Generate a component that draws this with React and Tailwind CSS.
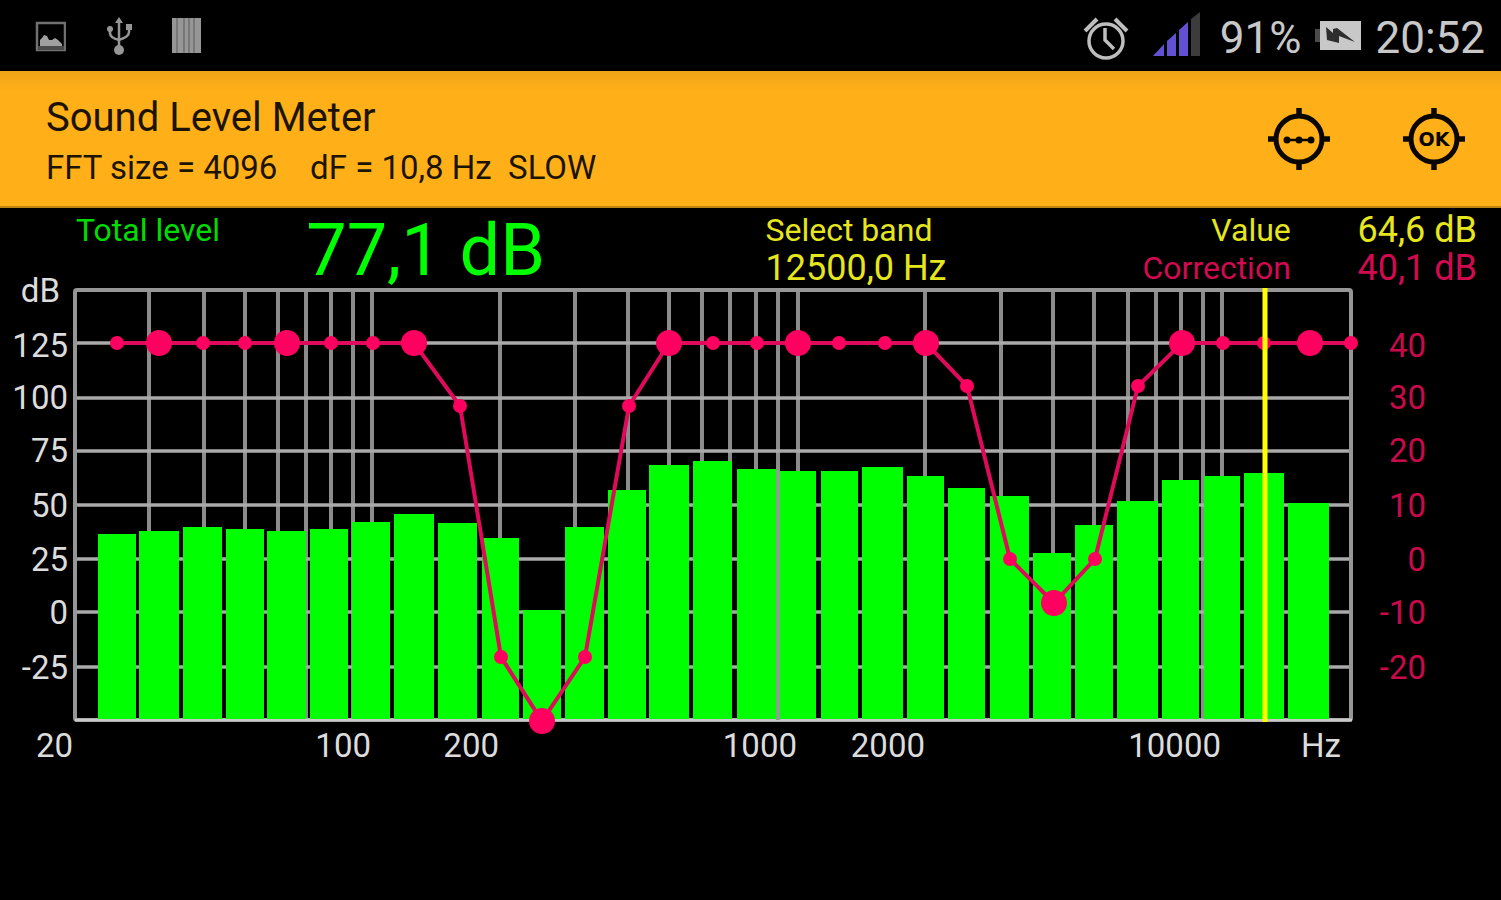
import { useState } from "react"

const verticals = [
  149, 204, 245, 278, 306, 331, 353, 372, 500, 575, 628, 669, 702, 730, 756, 778, 798,
  925, 1001, 1053, 1094, 1128, 1156, 1181, 1203, 1222,
]
const horizontals = [343, 398, 451, 505, 559, 612, 667]

// x, width, top of each third-octave bar
const bars = [
  [98, 38, 534], [139, 40, 531], [183, 39, 527], [226, 38, 529], [267, 39, 531],
  [310, 38, 529], [352, 38, 522], [394, 40, 514], [438, 39, 523], [482, 37, 538],
  [523, 38, 610], [565, 39, 527], [608, 38, 490], [649, 40, 465], [693, 39, 461],
  [737, 39, 469], [780, 36, 471], [821, 37, 471], [862, 41, 467], [907, 37, 476],
  [948, 37, 488], [990, 39, 496], [1033, 38, 553], [1075, 38, 525], [1117, 41, 501],
  [1162, 37, 480], [1204, 36, 476], [1244, 40, 473], [1288, 41, 503],
]

// x, y, octave point or not
const correction = [
  [117, 343, false], [159, 343, true], [203, 343, false], [245, 343, false],
  [287, 343, true], [331, 343, false], [373, 343, false], [414, 343, true],
  [460, 406, false], [501, 657, false], [542, 721, true], [585, 657, false],
  [629, 406, false], [669, 343, true], [713, 343, false], [757, 343, false],
  [798, 343, true], [839, 343, false], [885, 343, false], [926, 343, true],
  [967, 386, false], [1010, 559, false], [1054, 603, true], [1095, 559, false],
  [1138, 386, false], [1182, 343, true], [1223, 343, false], [1264, 343, false],
  [1310, 343, true], [1351, 343, false],
]

const leftLabels = [["dB", 60, 302], ["125", 68, 357], ["100", 68, 409], ["75", 68, 462],
  ["50", 68, 517], ["25", 68, 571], ["0", 68, 624], ["-25", 68, 679]]
const rightLabels = [["40", 357], ["30", 409], ["20", 462], ["10", 517],
  ["0", 571], ["-10", 624], ["-20", 679]]
const bottomLabels = [["20", 73], ["100", 371], ["200", 499], ["1000", 797],
  ["2000", 925], ["10000", 1221], ["Hz", 1341]]

const StatusBar = () => {
  return (
    <div className="flex h-[71px] items-center justify-between pr-4 pl-[34px] pt-1 text-[#c8c8c8]">
      <div className="mb-1 flex items-center gap-[39px]">
        {/* Picture */}
        <svg className="h-8 w-8" viewBox="0 0 32 32">
          <path d="M3 3H31V30H3Z" fill="none" stroke="#707070" strokeWidth="2.5" />
          <path d="M6 26V20L8 18L10 15L13 16L15 20L18 20L21 18L24 20L28 24V26Z" fill="#a0a0a0" />
          <path d="M4 26H30V30H4Z" fill="#4a4a4a" />
        </svg>
        {/* USB */}
        <svg className="h-10 w-7" viewBox="0 0 28 40" fill="none" stroke="#969696" strokeWidth="2.5">
          <path d="M14 5V34M14 24Q5 22 5 17V13M14 24Q24 21 24 16V11" />
          <path d="M14 1L18 7H10Z" fill="#969696" stroke="none" />
          <circle cx="14" cy="34" r="5" fill="#969696" stroke="none" />
          <circle cx="5" cy="13" r="3" fill="#969696" stroke="none" />
          <path d="M21 8H27V14H21Z" fill="#969696" stroke="none" />
        </svg>
        {/* Barcode */}
        <svg className="h-9 w-[30px]" viewBox="0 0 30 36">
          <path d="M0 0H29V35H0Z" fill="#969696" />
          <path d="M5 0V35M12 0V35M17 0V35M22 0V35" stroke="#6e6e6e" strokeWidth="1.5" />
        </svg>
      </div>
      <div className="flex items-center text-[44px] leading-none">
        {/* Alarm */}
        <svg className="mr-6 h-11 w-[46px]" viewBox="0 0 46 44" fill="none" stroke="#bebebe">
          <circle cx="23" cy="25" r="17" strokeWidth="3.5" />
          <path d="M22 12V24L31 33" strokeWidth="3.5" />
          <path d="M2 15L14 3M44 15L32 3" strokeWidth="4" />
        </svg>
        {/* Signal */}
        <svg className="mr-5 mb-2 h-11 w-[47px]" viewBox="0 0 47 44">
          <path d="M0 44L11 32V44ZM14 44V29L23 21V44ZM26 44V18L35 10V44Z" fill="#6450d2" />
          <path d="M38 44V7L47 0V44Z" fill="#3c3c3c" />
        </svg>
        <span>91%</span>
        {/* Battery */}
        <svg className="mx-[14px] mb-1 h-[30px] w-[46px]" viewBox="0 0 46 30">
          <path d="M0 8H5V21H0Z" fill="#4b4b4b" />
          <path d="M5 0H46V29H5Z" fill="#c8c8c8" />
          <path d="M11 6L18 12V8L22 7L40 21L24 15V22L12 19Z" fill="#2d2d2d" />
        </svg>
        <span>20:52</span>
      </div>
    </div>
  )
}

const TargetButton = ({ label, pressed, onClick, children }) => {
  return (
    <button
      className="flex w-[135px] cursor-pointer items-center justify-center"
      aria-label={label}
      aria-pressed={pressed}
      onClick={onClick}
    >
      <svg className="h-16 w-16" viewBox="0 0 64 64">
        <circle cx="32" cy="32" r="23" fill="none" stroke="#0a0600" strokeWidth="5" />
        <path d="M32 1V9M32 55V63M1 32H9M55 32H63" stroke="#0a0600" strokeWidth="5.5" />
        {children}
      </svg>
    </button>
  )
}

const Header = () => {
  const [calibrating, setCalibrating] = useState(false)

  return (
    <header className="flex h-[137px] justify-between border-b-2 border-[#c08410] bg-[linear-gradient(#eea416,#ffb018_20px)] text-[#1c1400]">
      <div className="pt-[22px] pl-[46px]">
        <h1 className="text-[40px] leading-[50px]">Sound Level Meter</h1>
        <p className="text-[33px] leading-[50px] whitespace-pre">FFT size = 4096    dF = 10,8 Hz  SLOW</p>
      </div>
      <div className="flex">
        <TargetButton label="Calibrate" pressed={calibrating} onClick={() => setCalibrating(!calibrating)}>
          <path d="M18 33H46" stroke="#0a0600" strokeWidth="2.5" />
          <circle cx="20" cy="33" r="3.5" fill="#0a0600" />
          <circle cx="32" cy="33" r="3.5" fill="#0a0600" />
          <circle cx="44" cy="33" r="3.5" fill="#0a0600" />
        </TargetButton>
        <TargetButton label="Accept" onClick={() => setCalibrating(false)}>
          <text x="32" y="39" textAnchor="middle" className="fill-[#0a0600] font-['DejaVu_Sans',sans-serif] text-[19px] font-bold">OK</text>
        </TargetButton>
      </div>
    </header>
  )
}

const Readouts = () => {
  return (
    <div className="grid h-[71px] grid-cols-[20%_31%_20%_15%_14%] pt-[3px] text-[32px] leading-[38px]">
      <p className="pl-[76px] whitespace-nowrap text-[#00dc00]">Total level</p>
      <p className="pl-[6px] text-[72px] leading-[80px] text-[#00ff00]">77,1 dB</p>
      <div className="text-[#e6e61e]">
        <p>Select band</p>
        <p className="text-[36px]">12500,0 Hz</p>
      </div>
      <div className="text-right">
        <p className="text-[#e6e61e]">Value</p>
        <p className="text-[#d20a50]">Correction</p>
      </div>
      <div className="pr-6 text-right text-[36px]">
        <p className="text-[#e6e61e]">64,6 dB</p>
        <p className="text-[#d20a50]">40,1 dB</p>
      </div>
    </div>
  )
}

const Chart = () => {
  return (
    <svg className="block w-full overflow-visible text-[33px]" viewBox="0 279 1501 491" role="img" aria-label="Level by band">
      {/* Grid */}
      <g stroke="#8c8c8c" strokeWidth="4">
        {verticals.map((x) => <line key={x} x1={x} x2={x} y1="290" y2="720" />)}
      </g>
      <g stroke="#aaaaaa" strokeWidth="3.5">
        {horizontals.map((y) => <line key={y} x1="75" x2="1351" y1={y} y2={y} />)}
      </g>
      <rect x="75" y="290" width="1276" height="430" rx="2" fill="none" stroke="#969696" strokeWidth="4" />
      <line x1="75" x2="1352" y1="720" y2="720" stroke="#c8c8c8" strokeWidth="3" />

      {/* Levels */}
      {bars.map(([x, width, top]) => (
        <rect key={x} x={x} y={top} width={width} height={719 - top} fill="#00ff00" />
      ))}
      <path d="M778 470V720" stroke="#8ca08c" strokeWidth="4" />

      {/* Correction curve */}
      <polyline
        points={correction.map(([x, y]) => `${x},${y}`).join(" ")}
        fill="none" stroke="#e00a5a" strokeWidth="4"
      />
      {correction.map(([x, y, octave]) => (
        <circle key={x} cx={x} cy={y} r={octave ? 13 : 7} fill="#ff0060" />
      ))}

      {/* Selected band */}
      <line x1="1265" x2="1265" y1="288" y2="722" stroke="#ffff00" strokeWidth="5" />

      {/* Axis labels */}
      <g fill="#dcdcdc" textAnchor="end">
        {leftLabels.map(([text, x, y]) => <text key={text} x={x} y={y}>{text}</text>)}
        {bottomLabels.map(([text, x]) => <text key={text} x={x} y="757">{text}</text>)}
      </g>
      <g fill="#c80a4b" textAnchor="end">
        {rightLabels.map(([text, y]) => <text key={text} x="1426" y={y}>{text}</text>)}
      </g>
    </svg>
  )
}

const App = () => {
  return (
    <div className="min-h-screen bg-black font-['Roboto',sans-serif]">
      <StatusBar />
      <Header />
      <main>
        <Readouts />
        <Chart />
      </main>
    </div>
  )
}

export default App
